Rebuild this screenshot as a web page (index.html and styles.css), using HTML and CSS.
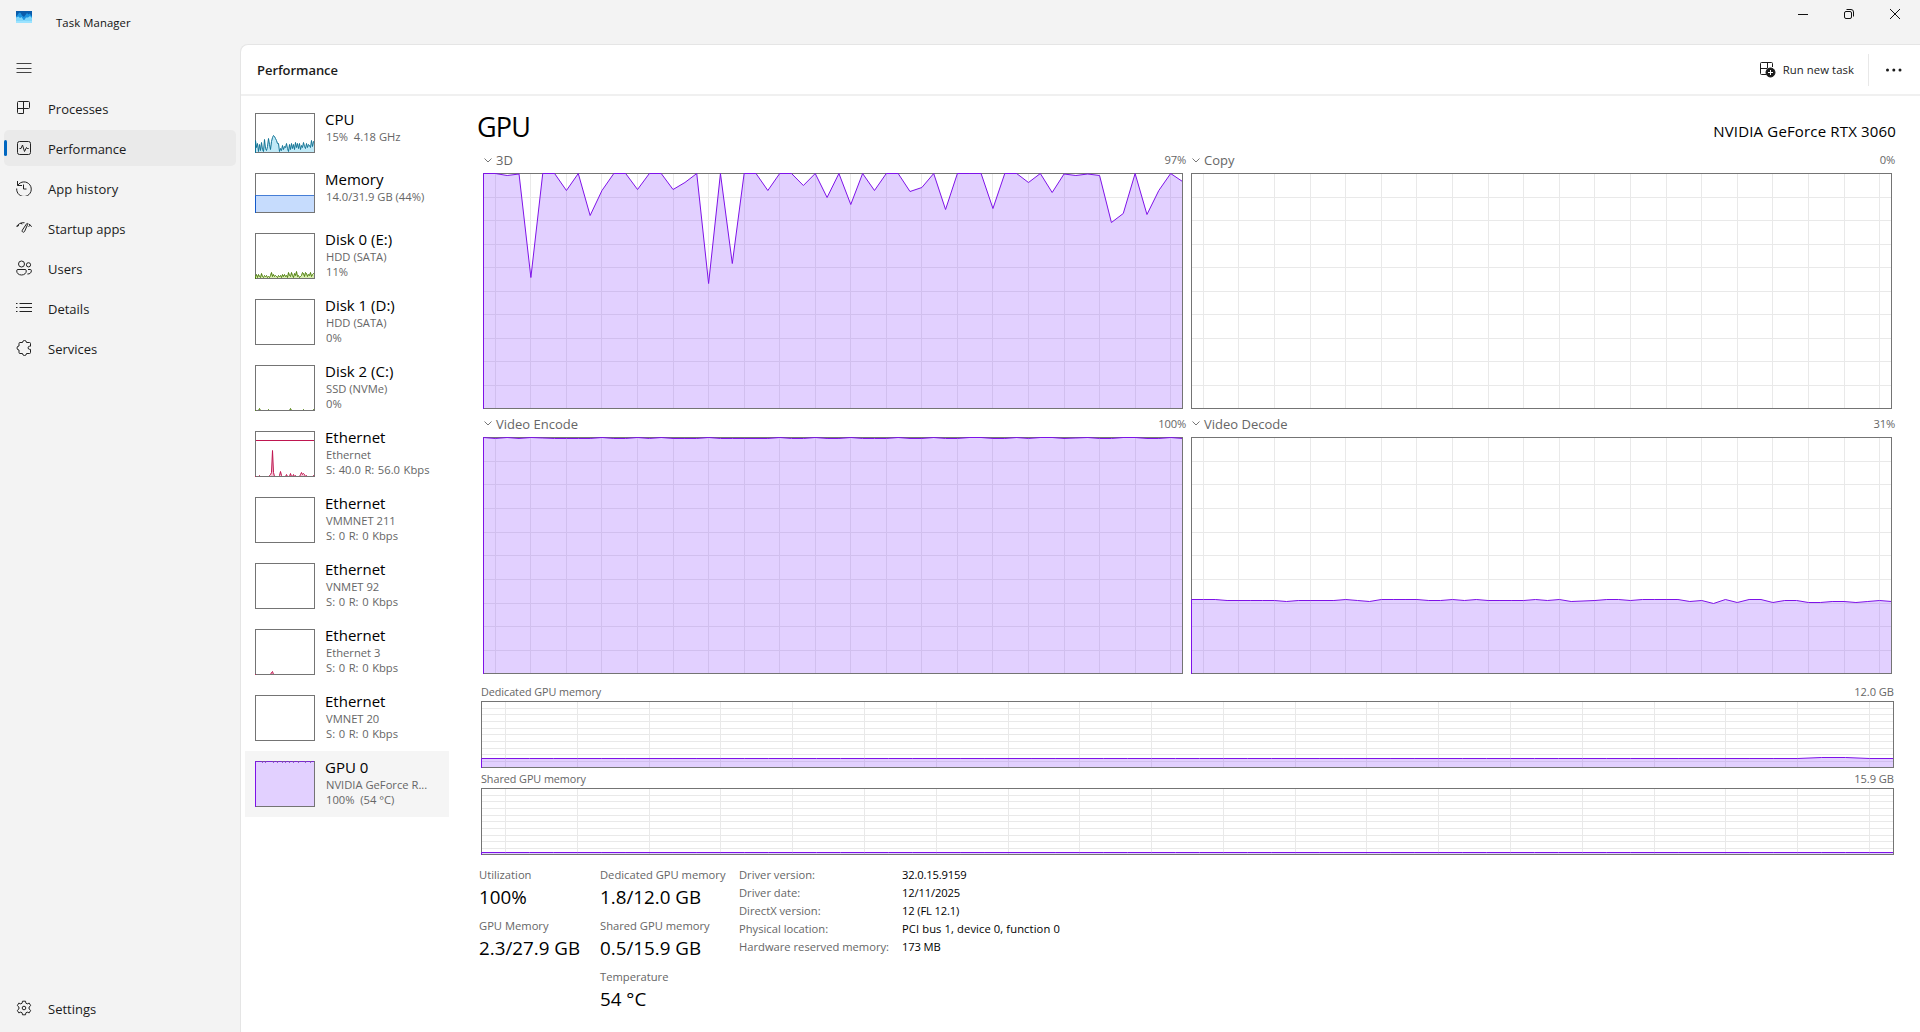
FILE: index.html
```html
<!DOCTYPE html>
<html lang="en">
<head>
<meta charset="utf-8">
<title>Task Manager</title>
<link rel="stylesheet" href="styles.css">
</head>
<body>
<div class="window">
  <header class="titlebar">
    <svg class="app-icon" width="16" height="12" viewBox="0 0 16 12"><path fill="#0a5cab" d="M0 0h16v7H0z"/><path fill="#1c93e0" d="M0 5.500 1.500 4 3 1.800h1.500L6 4.500l2 1.500 1.500-2L11 2l1.500 1.500 1.200-1L16 5.500V9H0z"/><path fill="#7fd6fa" d="M0 6.500 2.500 5.500 4 7 5.500 6 8 9.500 10 6.500h2L14 5l2 2v5H0z"/><path fill="#9be3ff" d="M0 10h16v2H0z"/></svg>
    <span class="app-title">Task Manager</span>
    <div class="window-controls">
      <svg width="12" height="12" viewBox="0 0 12 12"><path d="M1 6.500h10"/></svg>
      <svg width="12" height="12" viewBox="0 0 12 12"><rect x="1.500" y="3.500" width="7" height="7" rx="1.500"/><path d="M3.500 1.500h4.500a2.500 2.500 0 0 1 2.500 2.500v4.500"/></svg>
      <svg width="12" height="12" viewBox="0 0 12 12"><path d="M1 1l10 10M11 1 1 11"/></svg>
    </div>
  </header>
  <div class="body">
    <nav class="nav">
      <svg class="menu" width="16" height="12" viewBox="0 0 16 12"><path d="M.5 1.500h15M.5 6.500h15M.5 10.500h15"/></svg>
      <a class="nav-item"><svg width="16" height="16" viewBox="0 0 16 16"><path d="M3 1.500h9.500a1 1 0 0 1 1 1v5a1 1 0 0 1-1 1h-11M7.500 1.500v12h-5a1 1 0 0 1-1-1v-10a1 1 0 0 1 1-1h.5"/></svg>Processes</a>
      <a class="nav-item active"><svg width="16" height="16" viewBox="0 0 16 16"><rect x="1.500" y="1.500" width="13" height="13" rx="2"/><path d="M3.500 8.500H5L6.500 5l2 6.500 2-4 .7 1h1.500"/></svg>Performance</a>
      <a class="nav-item history"><svg width="16" height="16" viewBox="0 0 16 16"><path d="M1.500 1v4.500H6M1.800 5.300A7.300 7.300 0 1 1 .7 8.500M7.500 4.500v4.500h3"/></svg>App history</a>
      <a class="nav-item"><svg width="16" height="16" viewBox="0 0 16 16"><path d="M.5 6.500C2 4 5 2.500 8.500 2.700M1 6.500l2-1.200M5 2.800l1 1.600M10.700 3.600 6.300 10.200a1.300 1.300 0 0 0 2.200 1.400L11.700 4.300a.6.6 0 0 0-1-.7zM12.700 4c1.200.6 2.200 1.500 2.900 2.800M12.500 6.500l1.800-1.300"/></svg>Startup apps</a>
      <a class="nav-item"><svg width="16" height="16" viewBox="0 0 16 16"><circle cx="5.500" cy="4" r="3"/><circle cx="12.500" cy="4.800" r="2.100"/><path d="M2 9.500h7a1.300 1.300 0 0 1 1.300 1.300c0 2.500-2 4.200-4.800 4.200S.7 13.300.7 10.800A1.300 1.300 0 0 1 2 9.500zM12 9.500h2.200a1.200 1.200 0 0 1 1.200 1.200c0 2-1.600 3.500-4 3.300"/></svg>Users</a>
      <a class="nav-item"><svg width="16" height="16" viewBox="0 0 16 16"><path d="M3.500 3.500h12.500M3.500 7.500h12.500M3.500 11.500h12.500M0 3.500h1.500M0 7.500h1.500M0 11.500h1.500"/></svg>Details</a>
      <a class="nav-item"><svg width="16" height="16" viewBox="0 0 16 16"><path d="M4 2.500h2.500a2 2 0 0 1 4 0H13.500a1 1 0 0 1 1 1v2.700h-.8a1.600 1.600 0 0 0 0 3.200h.8v3.100a1 1 0 0 1-1 1h-3a2 2 0 0 1-4 0H4a1 1 0 0 1-1-1V10a2 2 0 0 1 0-4V3.500a1 1 0 0 1 1-1z"/></svg>Services</a>
      <a class="nav-item settings"><svg width="16" height="16" viewBox="0 0 16 16"><circle cx="8" cy="8" r="1.800"/><path d="M6.500 1.200h3l.4 2 1.300.7 2-.8 1.500 2.500-1.600 1.400v2l1.600 1.400-1.500 2.500-2-.8-1.300.7-.4 2h-3l-.4-2-1.300-.7-2 .8-1.500-2.500L2.900 9V7L1.300 5.600l1.500-2.500 2 .8 1.300-.7z"/></svg>Settings</a>
    </nav>
    <main class="panel">
      <div class="toolbar">
        <h1>Performance</h1>
        <button class="run-task"><svg width="16" height="16" viewBox="0 0 16 16"><path d="M6 12.500H1.500a1 1 0 0 1-1-1v-10a1 1 0 0 1 1-1h10a1 1 0 0 1 1 1V5M.5 6.500h7M7.500.5v5.500"/><circle class="solid" cx="10.500" cy="10.500" r="4.500"/><path class="plus" d="M10.500 8v5M8 10.500h5"/></svg>Run new task</button>
        <svg class="more" width="18" height="4" viewBox="0 0 18 4"><circle cx="2.500" cy="2" r="1.500"/><circle cx="8.800" cy="2" r="1.500"/><circle cx="15" cy="2" r="1.500"/></svg>
      </div>
      <div class="content">
        <ul class="devices">
          <li class="device short"><svg class="thumb cpu" data-thumb="cpu"></svg><div><h3>CPU</h3><p>15%&nbsp; 4.18 GHz</p></div></li>
          <li class="device short"><svg class="thumb memory" data-thumb="memory"></svg><div><h3>Memory</h3><p>14.0/31.9 GB (44%)</p></div></li>
          <li class="device"><svg class="thumb disk" data-thumb="disk0"></svg><div><h3>Disk 0 (E:)</h3><p>HDD (SATA)</p><p>11%</p></div></li>
          <li class="device"><svg class="thumb disk"></svg><div><h3>Disk 1 (D:)</h3><p>HDD (SATA)</p><p>0%</p></div></li>
          <li class="device"><svg class="thumb disk" data-thumb="disk2"></svg><div><h3>Disk 2 (C:)</h3><p>SSD (NVMe)</p><p>0%</p></div></li>
          <li class="device"><svg class="thumb net" data-thumb="net"></svg><div><h3>Ethernet</h3><p>Ethernet</p><p class="rate">S: 40.0 R: 56.0 Kbps</p></div></li>
          <li class="device"><svg class="thumb net"></svg><div><h3>Ethernet</h3><p>VMMNET 211</p><p class="rate">S: 0 R: 0 Kbps</p></div></li>
          <li class="device"><svg class="thumb net"></svg><div><h3>Ethernet</h3><p>VNMET 92</p><p class="rate">S: 0 R: 0 Kbps</p></div></li>
          <li class="device"><svg class="thumb net" data-thumb="net3"></svg><div><h3>Ethernet</h3><p>Ethernet 3</p><p class="rate">S: 0 R: 0 Kbps</p></div></li>
          <li class="device"><svg class="thumb net"></svg><div><h3>Ethernet</h3><p>VMNET 20</p><p class="rate">S: 0 R: 0 Kbps</p></div></li>
          <li class="device selected"><svg class="thumb gpu" data-thumb="gpu"></svg><div><h3>GPU 0</h3><p>NVIDIA GeForce R...</p><p>100% &nbsp;(54 °C)</p></div></li>
        </ul>
        <section class="detail">
          <div class="detail-head"><h2>GPU</h2><span class="model">NVIDIA GeForce RTX 3060</span></div>
          <div class="engines">
            <figure class="engine"><figcaption><svg class="chevron" width="8" height="5" viewBox="0 0 8 5"><path d="M.5.5 4 4 7.500.5"/></svg><span>3D</span><em>97%</em></figcaption><svg class="chart" data-chart="d3" width="700" height="236"></svg></figure>
            <figure class="engine"><figcaption><svg class="chevron" width="8" height="5" viewBox="0 0 8 5"><path d="M.5.5 4 4 7.500.5"/></svg><span>Copy</span><em>0%</em></figcaption><svg class="chart" data-chart="copy" width="701" height="236"></svg></figure>
            <figure class="engine second"><figcaption><svg class="chevron" width="8" height="5" viewBox="0 0 8 5"><path d="M.5.5 4 4 7.500.5"/></svg><span>Video Encode</span><em>100%</em></figcaption><svg class="chart" data-chart="encode" width="700" height="237"></svg></figure>
            <figure class="engine second"><figcaption><svg class="chevron" width="8" height="5" viewBox="0 0 8 5"><path d="M.5.5 4 4 7.500.5"/></svg><span>Video Decode</span><em>31%</em></figcaption><svg class="chart" data-chart="decode" width="701" height="237"></svg></figure>
          </div>
          <figure class="mem dedicated"><figcaption><span>Dedicated GPU memory</span><span class="cap">12.0 GB</span></figcaption><svg class="chart" data-chart="dedicated" width="1413" height="67"></svg></figure>
          <figure class="mem"><figcaption><span>Shared GPU memory</span><span class="cap">15.9 GB</span></figcaption><svg class="chart" data-chart="shared" width="1413" height="67"></svg></figure>
          <div class="stats">
            <dl class="stat-col">
              <dt>Utilization</dt><dd>100%</dd>
              <dt>GPU Memory</dt><dd>2.3/27.9 GB</dd>
            </dl>
            <dl class="stat-col wide">
              <dt>Dedicated GPU memory</dt><dd>1.8/12.0 GB</dd>
              <dt>Shared GPU memory</dt><dd>0.5/15.9 GB</dd>
              <dt>Temperature</dt><dd>54 °C</dd>
            </dl>
            <dl class="facts">
              <dt>Driver version:</dt><dd>32.0.15.9159</dd>
              <dt>Driver date:</dt><dd>12/11/2025</dd>
              <dt>DirectX version:</dt><dd>12 (FL 12.1)</dd>
              <dt>Physical location:</dt><dd class="location">PCI bus 1, device 0, function 0</dd>
              <dt>Hardware reserved memory:</dt><dd>173 MB</dd>
            </dl>
          </div>
        </section>
      </div>
    </main>
  </div>
</div>
<script src="charts.js"></script>
</body>
</html>
```
FILE: styles.css
```css
* { box-sizing: border-box; margin: 0; padding: 0; }
body { font-family: "Open Sans", "Noto Sans", sans-serif; color: #000; background: #f3f3f3; overflow: hidden; }
svg { display: block; flex: none; fill: none; }
.window { width: 1920px; height: 1032px; display: flex; flex-direction: column; background: #f3f3f3; }

.titlebar { height: 44px; display: flex; align-items: flex-start; padding: 0 19px 0 16px; }
.app-icon { margin-top: 11px; }
.app-title { margin-left: 24px; margin-top: 13px; font-size: 11.3px; line-height: 20px; color: #111; letter-spacing: .1px; }
.window-controls { margin-left: auto; display: flex; gap: 34px; padding-top: 8px; }
.window-controls svg { stroke: #111; stroke-width: 1; }

.body { flex: 1; display: flex; min-height: 0; }
.nav { width: 240px; display: flex; flex-direction: column; padding: 18px 4px 4px; }
.menu { margin: 0 0 14px 12px; stroke: #444; }
.nav-item { position: relative; height: 36px; margin: 2px 0; display: flex; align-items: center; padding: 2px 0 0 12px; border-radius: 5px; font-size: 13px; color: #1b1b1b; }
.nav-item svg { margin-right: 16px; margin-top: -3px; stroke: #222; stroke-width: 1; }
.nav-item.history { letter-spacing: .1px; }
.nav-item.active { background: #eaeaea; letter-spacing: -.05px; }
.nav-item.active::before { content: ""; position: absolute; left: 0; top: 10px; width: 3px; height: 16px; border-radius: 2px; background: #0067c0; }
.nav-item.settings { margin-top: auto; }

.panel { flex: 1; display: flex; flex-direction: column; background: #fff; border: 1px solid #e5e5e5; border-width: 1px 0 0 1px; border-top-left-radius: 8px; }
.toolbar { height: 51px; display: flex; align-items: center; padding-left: 16px; border-bottom: 2px solid #f0f0f0; }
.toolbar h1 { font-size: 13px; font-weight: 600; color: #1b1b1b; letter-spacing: -.05px; }
.run-task { margin-left: auto; height: 32px; display: flex; align-items: center; border: 0; border-right: 1px solid #e8e8e8; background: none; font: 11.3px "Open Sans", sans-serif; letter-spacing: .08px; color: #1b1b1b; padding-right: 14px; gap: 7px; }
.run-task svg { stroke: #1b1b1b; }
.run-task .solid { fill: #1b1b1b; }
.run-task .plus { stroke: #fff; }
.more { margin: 0 17px 0 16px; }
.more circle { fill: #1b1b1b; }

.content { flex: 1; display: flex; min-height: 0; }
.devices { list-style: none; width: 208px; padding: 7px 0 0 4px; }
.device { height: 66px; padding: 6px 0 0 10px; display: flex; gap: 10px; white-space: nowrap; }
.device.short { height: 60px; }
.device.selected { background: #f5f5f5; }
.thumb { width: 60px; height: 46px; margin-top: 4px; }
.short .thumb { height: 40px; }
.thumb, .chart { background: #fff; box-shadow: inset 0 0 0 1px #747474; }
.device h3 { font-weight: 400; font-size: 15px; line-height: 21px; margin-bottom: -1px; }
.device p { font-size: 11.2px; line-height: 15px; color: #666; padding-left: 1px; }
.device .rate { word-spacing: .7px; }
.cpu { --line: #117395; --fill: #c0e9f7; }
.memory { --line: #1259c9; --fill: #c6dcfd; }
.disk { --line: #4d7d0b; --fill: #d8eeb0; }
.net { --line: #bf1650; --fill: #f5c3d4; }
.gpu, .chart { --line: #7e12e8; --fill: rgba(131, 56, 255, .235); }

.detail { flex: 1; padding: 10px 0 0 27px; }
.detail-head { display: flex; justify-content: space-between; align-items: center; padding-right: 24px; height: 43px; }
.detail-head h2 { font-weight: 400; font-size: 27px; line-height: 40px; letter-spacing: -.8px; padding: 0 0 2px 1px; }
.model { font-size: 15px; letter-spacing: .16px; padding-top: 7px; }
.engines { display: grid; grid-template-columns: 700px 701px; column-gap: 8px; padding-left: 7px; }
.engine figcaption { height: 24px; display: flex; align-items: center; margin-right: -3px; padding: 0 0 2px 1px; font-size: 13px; line-height: 20px; color: #666; }
.engine.second figcaption { height: 28px; padding: 1px 0 0 1px; }
.chevron { margin-right: 4px; stroke: #777; }
.engine em { margin-left: auto; font-style: normal; font-size: 11.2px; letter-spacing: -.2px; }
.mem { margin-left: 5px; }
.mem figcaption { width: 1413px; height: 20px; display: flex; justify-content: space-between; font-size: 10.8px; letter-spacing: -.05px; line-height: 21px; color: #666; }
.mem.dedicated figcaption { height: 27px; line-height: 36px; }
.cap { font-size: 11.1px; }
.grid { stroke: #000; stroke-opacity: .085; shape-rendering: crispEdges; }
.edge { stroke: #747474; shape-rendering: crispEdges; }
.area { fill: var(--fill); }
.line { stroke: var(--line); stroke-width: 1; }

.stats { display: flex; padding: 10px 0 0 3px; }
.stat-col { width: 121px; white-space: nowrap; }
.stat-col.wide { width: 139px; }
.stat-col dt { font-size: 11.2px; line-height: 20px; color: #666; }
.stat-col dd { font-size: 18.8px; line-height: 31px; margin-top: -3px; margin-bottom: 3px; }
.facts { display: grid; grid-template-columns: 163px auto; grid-auto-rows: 18px; align-content: start; font-size: 11.2px; line-height: 20px; }
.facts dt { color: #666; }
.facts dd { white-space: nowrap; letter-spacing: -.15px; }
.facts .location { letter-spacing: .1px; }
```
FILE: charts.js
```javascript
const NS = 'http://www.w3.org/2000/svg';
const flat = (v) => new Array(60).fill(v);

// Distance in pixels from the top edge of each chart, one sample per second.
const series = {
  d3: [0,0,2,.5,104,0,0,17,0,42,17,0,0,16,0,0,16,9,0,110,0,90,0,0,17,0,0,12,0,24,0,31,0,17,0,0,18,14,0,36,0,0,0,35,0,0,9,0,19,.5,2,.5,2,49,40,0,41,17,0,8],
  encode: [0,1,0,1,0,.5,1,1,1,1,0,1,1,0,1,0,1,1,1,0,1,1,1,1,1,0,1,1,0,1,1,0,1,1,1,0,1,1,0,1,1,0,0,1,1,0,1,0,0,1,.5,0,1,1,0,0,1,1,0,1],
  decode: [162,162,162,163,163,163,163,163,164,163,163,163,163,162,163,164,162,162,162,162,163,163,162,163,162,163,163,163,163,162,163,162,164,163.5,163,162,162,163,162,162,162,162,164,163,166,162,165,162,162,165,163,163,165,165,164,164,165,164,163,164],
  dedicated: flat(57).map((v, i) => (i === 56 || i === 57 ? 56 : v)),
  shared: flat(64)
};

// Heights above the bottom edge for the sidebar thumbnails, one per pixel.
const thumbs = {
  cpu: [12,5,9,1,8,2,10,3,1,13,4,2,6,14,8,3,15,4,3,9,6,4,11,17,16,14,12,10,9,9,5,9,4,1,8,3,9,4,8,3,10,5,9,4,9,3,7,5,10,6,4,9,5,8,7,5,12,6,11,12].map((v, i, a) => (i > 15 && i < 19 ? [11, 15, 17][i - 16] : i > 18 && i < 24 ? [16, 14, 12, 9, 9][i - 19] : i > 23 && i < 30 ? [1, 4, 2, 7, 3, 6][i - 24] : v)),
  memory: flat(17),
  disk0: [2,4,1,4,2,1,5,2,1,3,2,3,1,2,1,3,6,2,4,2,3,2,1,3,2,3,1,4,2,4,2,3,1,6,3,2,6,3,1,5,3,7,2,3,1,2,3,6,5,2,6,5,2,4,3,6,2,4,5,4],
  disk2: flat(0).map((v, i) => ({4: 2, 13: 1, 35: 2, 48: 1, 58: 1}[i] || 0)),
  net: flat(0).map((v, i) => ({4: 1, 14: 1, 15: 2, 16: 4, 17: 26, 18: 4, 24: 1, 25: 5, 26: 1, 31: 2, 35: 3, 38: 2, 40: 1, 45: 2, 46: 4, 47: 2, 48: 3, 49: 2, 51: 1, 58: 1}[i] || 0)),
  net3: flat(0).map((v, i) => ({16: 2, 17: 3}[i] || 0)),
  gpu: flat(45).map((v, i) => ([7, 10, 18, 22, 27, 30, 34, 38, 43, 50, 55].includes(i) ? 44 : 45))
};

function path(svg, cls, d) {
  const p = document.createElementNS(NS, 'path');
  p.setAttribute('class', cls);
  p.setAttribute('d', d);
  svg.appendChild(p);
}

function plot(svg, ys, w, h) {
  const pts = ys.map((y, i) => `${(.5 + i * (w - 1) / 59).toFixed(2)} ${(y + .5).toFixed(2)}`);
  path(svg, 'area', `M${pts.join('L')}V${h - 1}H.5Z`);
  path(svg, 'line', `M.5 ${h}L${pts.join('L')}`);
  path(svg, 'edge', `M1 ${h - .5}H${w - .5}V0`);
}

document.querySelectorAll('[data-chart]').forEach((svg) => {
  const w = +svg.getAttribute('width'), h = +svg.getAttribute('height');
  const rows = h === 236 ? 235 : h - .33;
  let d = '';
  for (let i = 1; i < 60; i += 3) d += `M${Math.round(i * (w - 1) / 59) + .5} 1V${h - 1}`;
  for (let k = 1; k < 10; k++) d += `M1 ${Math.round(k * rows / 10) + .5}H${w - 1}`;
  path(svg, 'grid', d);
  const ys = series[svg.dataset.chart];
  if (ys) plot(svg, ys, w, h);
});

document.querySelectorAll('[data-thumb]').forEach((svg) => {
  const name = svg.dataset.thumb, h = svg.closest('.short') ? 40 : 46;
  plot(svg, thumbs[name].map((v) => h - 1 - v), 60, h);
  if (name === 'net') path(svg, 'line', 'M1 9.500H59');
});
```
